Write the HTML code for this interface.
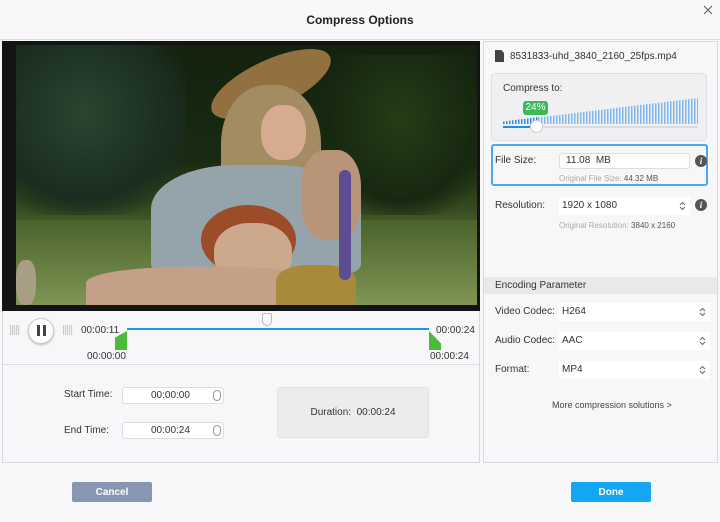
<!DOCTYPE html>
<html><head><meta charset="utf-8"><style>
*{margin:0;padding:0;box-sizing:border-box}
body{width:720px;height:522px;background:#f7f7fa;font-family:"Liberation Sans",sans-serif;font-size:10px;color:#333;position:relative;overflow:hidden}
.a{position:absolute;line-height:12px}
.inp{position:absolute;background:#fff;border:1px solid #dcdde2;border-radius:3px}
.sel{position:absolute;background:#fff;height:18px}
.arr{position:absolute;right:4px;top:4px;width:7px;height:10px}
.info{position:absolute;width:12px;height:12px;border-radius:50%;background:#555;color:#fff;font:italic bold 9px "Liberation Serif",serif;text-align:center;line-height:12px}
.btn{position:absolute;width:80px;height:20px;border-radius:2px;color:#fff;font-weight:bold;display:flex;align-items:center;justify-content:center;font-size:10px}
</style></head><body>
<svg width="0" height="0" style="position:absolute"><defs><symbol id="ud" viewBox="0 0 7 10"><path d="M1 4 L3.5 1.5 L6 4 M1 6 L3.5 8.5 L6 6" fill="none" stroke="#666" stroke-width="1"/></symbol></defs></svg>
<!-- title -->
<div class="a" style="left:0;top:0;width:720px;height:40px;background:#f8f8fa;border-bottom:1px solid #dadbe0"></div>
<div class="a" style="left:0;top:14px;width:720px;text-align:center;font-weight:bold;font-size:12px;color:#222">Compress Options</div>
<svg class="a" style="left:703px;top:5px" width="10" height="10"><path d="M1 1L9 9M9 1L1 9" stroke="#666" stroke-width="1.2"/></svg>

<!-- left panel -->
<div class="a" style="left:2px;top:41px;width:478px;height:422px;background:#f7f7fa;border:1px solid #d8d9de"></div>
<div class="a" style="left:2px;top:41px;width:478px;height:270px;background:#141414"></div>
<div class="a" style="left:16px;top:45px;width:461px;height:260px;overflow:hidden;background:linear-gradient(180deg,#13210d 0%,#192b13 45%,#34491f 62%,#5f7a3a 80%,#6f8545 100%)">
 <div class="a" style="left:0;top:0;width:170px;height:170px;background:radial-gradient(ellipse at 40% 40%,#2a4530 0%,#1a2d1f 60%,transparent 80%)"></div>
 <div class="a" style="left:300px;top:10px;width:170px;height:160px;background:radial-gradient(ellipse at 50% 40%,#243d17 0%,#172811 60%,transparent 80%)"></div>
 <div class="a" style="left:0;top:175px;width:461px;height:85px;background:linear-gradient(180deg,#4a632b,#7f9555)"></div>
 <div class="a" style="left:190px;top:15px;width:130px;height:48px;border-radius:50%;background:#93703f;transform:rotate(-25deg)"></div>
 <div class="a" style="left:205px;top:40px;width:100px;height:130px;border-radius:45% 45% 30% 30%;background:#a38c62"></div>
 <div class="a" style="left:245px;top:60px;width:45px;height:55px;border-radius:45%;background:#d6ab90"></div>
 <div class="a" style="left:135px;top:120px;width:210px;height:110px;border-radius:40% 40% 10% 10%;background:#94a4aa"></div>
 <div class="a" style="left:285px;top:105px;width:60px;height:90px;border-radius:40%;background:#b89478"></div>
 <div class="a" style="left:185px;top:160px;width:95px;height:70px;border-radius:50%;background:#9c4c28"></div>
 <div class="a" style="left:198px;top:178px;width:78px;height:62px;border-radius:45%;background:#cca88d"></div>
 <div class="a" style="left:70px;top:222px;width:240px;height:40px;border-radius:40% 40% 0 0;background:#c4a086"></div>
 <div class="a" style="left:260px;top:220px;width:80px;height:40px;border-radius:40% 40% 0 0;background:#a98a3a"></div>
 <div class="a" style="left:323px;top:125px;width:12px;height:110px;border-radius:6px;background:#5d4c94"></div>
 <div class="a" style="left:0;top:215px;width:20px;height:45px;border-radius:40%;background:#a89e84"></div>
</div>

<!-- controls -->
<div class="a" style="left:10px;top:325px;width:10px;height:10px;background:repeating-linear-gradient(90deg,#bbb 0 1px,transparent 1px 2px),#eee;opacity:.7"></div>
<div class="a" style="left:28px;top:318px;width:26px;height:26px;border-radius:50%;background:#fff;border:1px solid #ccc;box-shadow:0 1px 2px rgba(0,0,0,.25)"></div>
<div class="a" style="left:37px;top:325px;width:3px;height:11px;background:#444"></div>
<div class="a" style="left:43px;top:325px;width:3px;height:11px;background:#444"></div>
<div class="a" style="left:63px;top:325px;width:10px;height:10px;background:repeating-linear-gradient(90deg,#bbb 0 1px,transparent 1px 2px),#eee;opacity:.7"></div>
<div class="a" style="left:81px;top:325px">00:00:11</div>
<div class="a" style="left:127px;top:328px;width:302px;height:2px;background:#1a9bf0"></div>
<div class="a" style="left:262px;top:313px;width:10px;height:13px;background:#fafafa;border:1px solid #bbb;border-radius:2px 2px 5px 5px"></div>
<div class="a" style="left:115px;top:331px;width:12px;height:19px;background:#4cbb3a;clip-path:polygon(100% 0,100% 100%,0 100%,0 35%)"></div>
<div class="a" style="left:429px;top:331px;width:12px;height:19px;background:#4cbb3a;clip-path:polygon(0 0,100% 65%,100% 100%,0 100%)"></div>
<div class="a" style="left:87px;top:351px">00:00:00</div>
<div class="a" style="left:436px;top:325px">00:00:24</div>
<div class="a" style="left:430px;top:351px">00:00:24</div>
<div class="a" style="left:3px;top:364px;width:476px;height:1px;background:#dcdde2"></div>

<div class="a" style="left:64px;top:389px">Start Time:</div>
<div class="inp" style="left:122px;top:387px;width:102px;height:17px"><span class="a" style="left:28px;top:2px">00:00:00</span><span class="a" style="left:90px;top:2px;width:8px;height:11px;border:1px solid #999;border-radius:4px"></span></div>
<div class="a" style="left:64px;top:425px">End Time:</div>
<div class="inp" style="left:122px;top:422px;width:102px;height:17px"><span class="a" style="left:28px;top:2px">00:00:24</span><span class="a" style="left:90px;top:2px;width:8px;height:11px;border:1px solid #999;border-radius:4px"></span></div>
<div class="a" style="left:277px;top:387px;width:152px;height:51px;background:#ececee;border:1px solid #e2e2e4;border-radius:3px;text-align:center;line-height:49px">Duration:&nbsp; 00:00:24</div>

<!-- right panel -->
<div class="a" style="left:483px;top:41px;width:235px;height:422px;background:#f7f7fa;border:1px solid #d8d9de"></div>
<div class="a" style="left:495px;top:50px;width:9px;height:12px;background:#444;clip-path:polygon(0 0,70% 0,100% 25%,100% 100%,0 100%)"></div>
<div class="a" style="left:510px;top:51px;font-size:10px">8531833-uhd_3840_2160_25fps.mp4</div>
<div class="a" style="left:491px;top:73px;width:216px;height:68px;background:#f0f0f2;border:1px solid #e0e0e4;border-radius:4px"></div>
<div class="a" style="left:503px;top:83px">Compress to:</div>
<div class="a" style="left:538px;top:98px;width:160px;height:26px;background:repeating-linear-gradient(90deg,#7db8f3 0 1.3px,transparent 1.3px 3px);clip-path:polygon(0 75%,100% 0,100% 100%,0 100%)"></div>
<div class="a" style="left:503px;top:114px;width:35px;height:10px;background:repeating-linear-gradient(90deg,#2f8be6 0 1.3px,transparent 1.3px 3px);clip-path:polygon(0 75%,100% 30%,100% 100%,0 100%)"></div>
<div class="a" style="left:503px;top:126px;width:195px;height:2px;background:#ddd"></div>
<div class="a" style="left:503px;top:126px;width:34px;height:2px;background:#1a8fe8"></div>
<div class="a" style="left:530px;top:120px;width:13px;height:13px;border-radius:50%;background:#fff;border:1px solid #ccc"></div>
<div class="a" style="left:523px;top:101px;width:25px;height:14px;background:#3cba5a;border-radius:3px;color:#fff;text-align:center;line-height:14px;font-size:10px">24%</div>

<div class="a" style="left:491px;top:144px;width:217px;height:42px;border:2px solid #4aa8f0;border-radius:3px"></div>
<div class="a" style="left:495px;top:155px">File Size:</div>
<div class="inp" style="left:559px;top:153px;width:131px;height:16px"><span class="a" style="left:6px;top:1px">11.08&nbsp; MB</span></div>
<div class="info" style="left:695px;top:155px">i</div>
<div class="a" style="left:559px;top:173px;font-size:8px;color:#aaa">Original File Size: <span style="color:#555">44.32 MB</span></div>

<div class="a" style="left:495px;top:200px">Resolution:</div>
<div class="sel" style="left:559px;top:197px;width:131px"><span class="a" style="left:3px;top:3px">1920 x 1080</span><svg class="arr"><use href="#ud"/></svg></div>
<div class="info" style="left:695px;top:199px">i</div>
<div class="a" style="left:559px;top:220px;font-size:8px;color:#aaa">Original Resolution: <span style="color:#555">3840 x 2160</span></div>

<div class="a" style="left:484px;top:277px;width:233px;height:17px;background:#e9e9ec"></div>
<div class="a" style="left:495px;top:280px">Encoding Parameter</div>
<div class="a" style="left:495px;top:306px">Video Codec:</div>
<div class="sel" style="left:559px;top:303px;width:151px"><span class="a" style="left:3px;top:3px">H264</span><svg class="arr"><use href="#ud"/></svg></div>
<div class="a" style="left:495px;top:335px">Audio Codec:</div>
<div class="sel" style="left:559px;top:332px;width:151px"><span class="a" style="left:3px;top:3px">AAC</span><svg class="arr"><use href="#ud"/></svg></div>
<div class="a" style="left:495px;top:364px">Format:</div>
<div class="sel" style="left:559px;top:361px;width:151px"><span class="a" style="left:3px;top:3px">MP4</span><svg class="arr"><use href="#ud"/></svg></div>
<div class="a" style="left:552px;top:399px;font-size:9px;color:#444">More compression solutions &gt;</div>

<!-- buttons -->
<div class="btn" style="left:72px;top:482px;background:#8896b4">Cancel</div>
<div class="btn" style="left:571px;top:482px;background:#13a6f2">Done</div>
</body></html>
